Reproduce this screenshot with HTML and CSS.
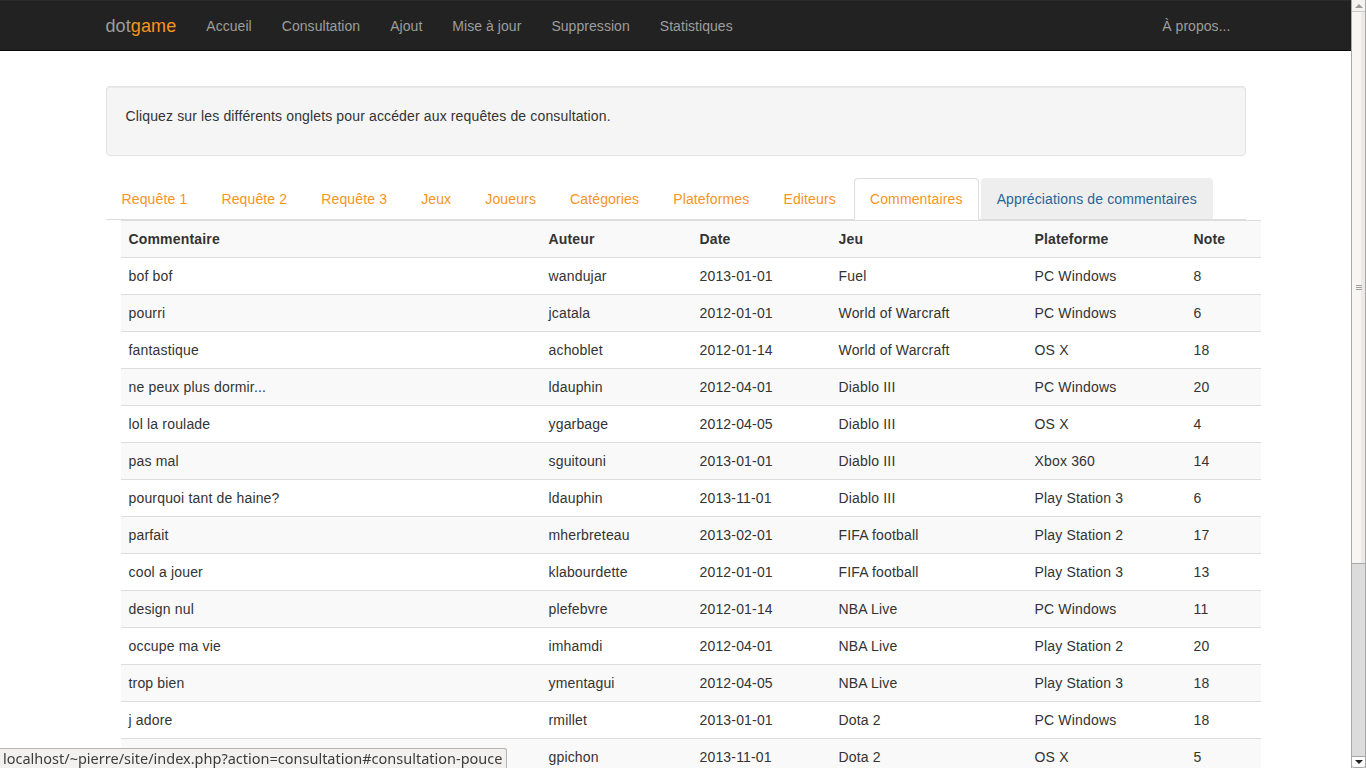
FILE: index.html
```html
<!DOCTYPE html>
<html lang="fr">
<head>
<meta charset="utf-8">
<title>dotgame - Consultation</title>
<link rel="stylesheet" href="styles.css">
</head>
<body>
<div class="page">
  <div class="topline"></div>
  <nav class="navbar">
    <div class="container navbar-inner">
      <a class="brand" href="#">dot<span class="brand-accent">game</span></a>
      <ul class="nav">
        <li><a href="#">Accueil</a></li>
        <li><a href="#">Consultation</a></li>
        <li><a href="#">Ajout</a></li>
        <li><a href="#">Mise à jour</a></li>
        <li><a href="#">Suppression</a></li>
        <li><a href="#">Statistiques</a></li>
      </ul>
      <ul class="nav nav-right">
        <li><a href="#">À propos...</a></li>
      </ul>
    </div>
  </nav>

  <div class="container">
    <div class="well"><p>Cliquez sur les différents onglets pour accéder aux requêtes de consultation.</p></div>

    <ul class="tabs">
      <li><a href="#">Requête 1</a></li>
      <li><a href="#">Requête 2</a></li>
      <li><a href="#">Requête 3</a></li>
      <li><a href="#">Jeux</a></li>
      <li><a href="#">Joueurs</a></li>
      <li><a href="#">Catégories</a></li>
      <li><a href="#">Plateformes</a></li>
      <li><a href="#">Editeurs</a></li>
      <li class="active"><a href="#">Commentaires</a></li>
      <li class="hover"><a href="#">Appréciations de commentaires</a></li>
    </ul>

    <div class="tab-content">
      <table class="table">
        <colgroup>
          <col class="c-com"><col class="c-aut"><col class="c-date"><col class="c-jeu"><col class="c-plat"><col class="c-note">
        </colgroup>
        <tbody>
          <tr><th>Commentaire</th><th>Auteur</th><th>Date</th><th>Jeu</th><th>Plateforme</th><th>Note</th></tr>
          <tr><td>bof bof</td><td>wandujar</td><td>2013-01-01</td><td>Fuel</td><td>PC Windows</td><td>8</td></tr>
          <tr><td>pourri</td><td>jcatala</td><td>2012-01-01</td><td>World of Warcraft</td><td>PC Windows</td><td>6</td></tr>
          <tr><td>fantastique</td><td>achoblet</td><td>2012-01-14</td><td>World of Warcraft</td><td>OS X</td><td>18</td></tr>
          <tr><td>ne peux plus dormir...</td><td>ldauphin</td><td>2012-04-01</td><td>Diablo III</td><td>PC Windows</td><td>20</td></tr>
          <tr><td>lol la roulade</td><td>ygarbage</td><td>2012-04-05</td><td>Diablo III</td><td>OS X</td><td>4</td></tr>
          <tr><td>pas mal</td><td>sguitouni</td><td>2013-01-01</td><td>Diablo III</td><td>Xbox 360</td><td>14</td></tr>
          <tr><td>pourquoi tant de haine?</td><td>ldauphin</td><td>2013-11-01</td><td>Diablo III</td><td>Play Station 3</td><td>6</td></tr>
          <tr><td>parfait</td><td>mherbreteau</td><td>2013-02-01</td><td>FIFA football</td><td>Play Station 2</td><td>17</td></tr>
          <tr><td>cool a jouer</td><td>klabourdette</td><td>2012-01-01</td><td>FIFA football</td><td>Play Station 3</td><td>13</td></tr>
          <tr><td>design nul</td><td>plefebvre</td><td>2012-01-14</td><td>NBA Live</td><td>PC Windows</td><td>11</td></tr>
          <tr><td>occupe ma vie</td><td>imhamdi</td><td>2012-04-01</td><td>NBA Live</td><td>Play Station 2</td><td>20</td></tr>
          <tr><td>trop bien</td><td>ymentagui</td><td>2012-04-05</td><td>NBA Live</td><td>Play Station 3</td><td>18</td></tr>
          <tr><td>j adore</td><td>rmillet</td><td>2013-01-01</td><td>Dota 2</td><td>PC Windows</td><td>18</td></tr>
          <tr><td class="under-status"></td><td>gpichon</td><td>2013-11-01</td><td>Dota 2</td><td>OS X</td><td>5</td></tr>
        </tbody>
      </table>
    </div>
  </div>
</div>

<div class="scrollbar">
  <div class="sb-btn sb-up"><span class="tri-up"></span></div>
  <div class="sb-thumb"><span class="grip"></span></div>
  <div class="sb-track"></div>
  <div class="sb-btn sb-down"><span class="tri-down"></span></div>
</div>

<div class="statusbar">localhost/~pierre/site/index.php?action=consultation#consultation-pouce</div>
</body>
</html>
```

FILE: styles.css
```css
* { box-sizing: border-box; }
html, body { margin: 0; padding: 0; height: 100%; overflow: hidden; }
body {
  font-family: "Liberation Sans", Arial, sans-serif;
  font-size: 14px;
  line-height: 20px;
  letter-spacing: 0.14px;
  color: #333;
  background: #fff;
}
a { text-decoration: none; }

.page { width: 1351px; height: 768px; overflow: hidden; }

.topline { height: 2px; background: #2b2b2b; border-bottom: 1px solid #ececec; }

.container { width: 1170px; margin: 0 auto; padding: 0 15px; }

.navbar { background: #222; border-bottom: 1px solid #080808; height: 50px; margin-bottom: 35px; margin-top: -1px; }
.navbar-inner { display: flex; align-items: flex-start; }
.brand { font-size: 18px; line-height: 20px; padding: 15px 15px 14px 0; color: #9d9d9d; letter-spacing: 0.1px; }
.brand-accent { color: #f7941d; }
.nav { list-style: none; margin: 0; padding: 0; display: flex; }
.nav li a { display: block; padding: 15px 15px 14px; color: #9d9d9d; font-size: 14px; line-height: 20px; letter-spacing: 0.05px; }
.nav-right { margin-left: auto; }

.well {
  background: #f5f5f5;
  border: 1px solid #e3e3e3;
  border-radius: 4px;
  padding: 19px;
  min-height: 20px;
  box-shadow: inset 0 1px 1px rgba(0,0,0,0.05);
  margin-bottom: 22px;
}
.well p { margin: 0 0 10px; }

.tabs {
  list-style: none; margin: 0; padding: 0;
  display: flex;
  border-bottom: 1px solid #ddd;
}
.tabs li { margin-bottom: -1px; }
.tabs li a {
  display: block;
  padding: 10px 15px;
  margin-right: 2px;
  line-height: 20px;
  border: 1px solid transparent;
  border-radius: 4px 4px 0 0;
  color: #f7941d;
}
.tabs li.active a { background: #fff; border-color: #ddd #ddd transparent; }
.tabs li.hover a { background: #eee; border-color: #eee #eee #ddd; color: #2a6496; }

.tab-content { padding-left: 15px; }
.table { width: 1140px; border-collapse: collapse; border-spacing: 0; table-layout: fixed; letter-spacing: 0.17px; }
.c-com { width: 420px; }
.c-aut { width: 151px; }
.c-date { width: 139px; }
.c-jeu { width: 196px; }
.c-plat { width: 159px; }
.c-note { width: 75px; }
.table th, .table td {
  padding: 8px;
  height: 37px;
  line-height: 20px;
  text-align: left;
  vertical-align: top;
  border-top: 1px solid #ddd;
  white-space: nowrap;
}
.table th { font-weight: bold; }
.table tr:nth-child(odd) { background: #f9f9f9; }

.scrollbar {
  position: fixed; top: 0; right: 0; width: 15px; height: 768px;
  display: flex; flex-direction: column;
  background: #dcdcdc;
  border-left: 1px solid #a8a8a8;
  border-right: 1px solid #a8a8a8;
}
.sb-btn { height: 12px; background: #f4f3f1; display: flex; align-items: center; justify-content: center; flex: none; }
.sb-up { border-bottom: 1px solid #c8c8c8; }
.sb-down { border-top: 1px solid #a8a8a8; border-bottom: 1px solid #a8a8a8; border-radius: 0 0 3px 3px; background: #fff; }
.tri-up { width: 0; height: 0; border-left: 4px solid transparent; border-right: 4px solid transparent; border-bottom: 4px solid #9a9a9a; }
.tri-down { width: 0; height: 0; border-left: 4px solid transparent; border-right: 4px solid transparent; border-top: 4px solid #222; }
.sb-thumb {
  height: 552px; flex: none;
  background: linear-gradient(to right, #f7f6f4 0 70%, #eceae8 70% 100%);
  border-bottom: 1px solid #a8a8a8;
  display: flex; align-items: center; justify-content: center;
}
.grip { width: 6px; height: 5px; border-top: 1px solid #a0a0a0; border-bottom: 1px solid #a0a0a0; position: relative; }
.grip::after { content: ""; position: absolute; left: 0; right: 0; top: 1px; height: 1px; background: #a0a0a0; }
.sb-track { flex: 1; background: #dcdcdc; }

.statusbar {
  position: fixed; left: 0; bottom: 0;
  height: 20px;
  padding: 0 4px 0 3px;
  background: #f2f1f0;
  border: 1px solid #b5b5b5;
  border-left: none; border-bottom: none;
  border-radius: 0 3px 0 0;
  font-family: "Noto Sans", "DejaVu Sans", sans-serif;
  font-size: 14.5px;
  letter-spacing: 0;
  line-height: 19px;
  color: #3c3c3c;
  white-space: nowrap;
}
```
